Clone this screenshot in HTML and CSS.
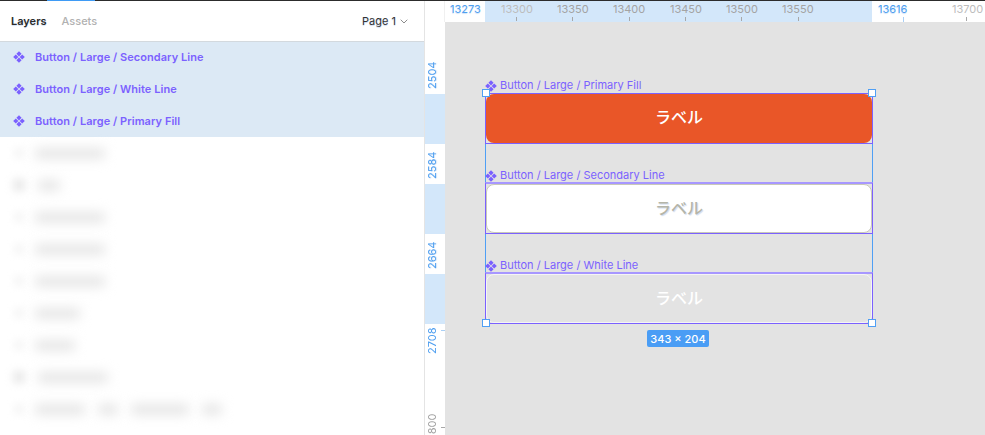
FILE: index.html
```html
<!DOCTYPE html>
<html lang="ja">
<head>
<meta charset="utf-8">
<title>Layers</title>
<link rel="stylesheet" href="styles.css">
</head>
<body>
<svg class="defs" width="0" height="0" aria-hidden="true">
  <symbol id="comp" viewBox="0 0 12 12">
    <path d="M6 .2 8.6 2.8 6 5.4 3.4 2.8ZM6 6.6 8.6 9.2 6 11.8 3.4 9.2ZM2.8 3.4 5.4 6 2.8 8.6 .2 6ZM9.2 3.4 11.8 6 9.2 8.6 6.6 6Z"/>
  </symbol>
</svg>
<div class="topline"><span class="topline-active"></span></div>
<div class="app">
  <aside class="sidebar">
    <header class="tabs">
      <span class="tab tab-on">Layers</span>
      <span class="tab">Assets</span>
      <span class="page">Page 1
        <svg class="chev" viewBox="0 0 8 5" width="8" height="5"><path d="M.7.7 4 4 7.3.7" fill="none" stroke="#8c8c8c"/></svg>
      </span>
    </header>
    <ul class="rows">
      <li class="row row-sel row-first"><svg class="ico"><use href="#comp"/></svg>Button / Large / Secondary Line</li>
      <li class="row row-sel"><svg class="ico"><use href="#comp"/></svg>Button / Large / White Line</li>
      <li class="row row-sel"><svg class="ico"><use href="#comp"/></svg>Button / Large / Primary Fill</li>
      <li class="row"><i class="dot"></i><i class="blob w70"></i></li>
      <li class="row"><i class="dot dark"></i><i class="blob w22 near"></i></li>
      <li class="row"><i class="dot"></i><i class="blob w70"></i></li>
      <li class="row"><i class="dot"></i><i class="blob w70"></i></li>
      <li class="row"><i class="dot"></i><i class="blob w70"></i></li>
      <li class="row"><i class="dot"></i><i class="blob w45"></i></li>
      <li class="row"><i class="dot"></i><i class="blob w40"></i></li>
      <li class="row"><i class="dot dark"></i><i class="blob w70 near"></i></li>
      <li class="row"><i class="dot"></i><i class="blob w50"></i><i class="blob w20 gap"></i><i class="blob w58 gap"></i><i class="blob w20 gap"></i></li>
    </ul>
  </aside>
  <main class="stage">
    <div class="ruler-top">
      <span class="corner"></span>
      <div class="track-top">
        <span class="band-h"></span>
        <span class="hl hot" style="left:5px">13273</span>
        <span class="hl faint" style="left:56px">13300</span>
        <span class="hl" style="left:112px">13350</span>
        <span class="hl" style="left:168px">13400</span>
        <span class="hl" style="left:225px">13450</span>
        <span class="hl" style="left:281px">13500</span>
        <span class="hl" style="left:337px">13550</span>
        <span class="hl hot" style="left:433px">13616</span>
        <span class="hl faint" style="left:507px">13700</span>
        <i class="tick" style="left:71px"></i><i class="tick" style="left:127px"></i>
        <i class="tick" style="left:184px"></i><i class="tick" style="left:240px"></i>
        <i class="tick" style="left:296px"></i><i class="tick" style="left:353px"></i>
        <i class="tick tick-hot" style="left:458px"></i><i class="tick" style="left:521px"></i>
      </div>
    </div>
    <div class="below">
      <div class="ruler-left">
        <span class="band-v" style="top:72px"></span>
        <span class="band-v" style="top:162px"></span>
        <span class="band-v" style="top:252px"></span>
        <span class="vl hot" style="top:38px">2504</span>
        <span class="vl hot" style="top:128px">2584</span>
        <span class="vl hot" style="top:218px">2664</span>
        <span class="vl hot plain" style="top:304px">2708</span>
        <span class="vl plain grey" style="top:390px">2800</span>
        <i class="tick-h tick-h-hot" style="top:308px"></i>
        <i class="tick-h" style="top:405px"></i>
      </div>
      <div class="canvas">
        <div class="stack">
          <span class="sel-line sel-l"></span>
          <span class="sel-line sel-r"></span>
          <section class="frame">
            <div class="frame-label"><svg class="ico ico-s"><use href="#comp"/></svg>Button / Large / Primary Fill</div>
            <div class="frame-box box-first"><div class="btn btn-fill">ラベル</div></div>
          </section>
          <section class="frame">
            <div class="frame-label"><svg class="ico ico-s"><use href="#comp"/></svg>Button / Large / Secondary Line</div>
            <div class="frame-box"><div class="btn btn-line">ラベル</div></div>
          </section>
          <section class="frame">
            <div class="frame-label"><svg class="ico ico-s"><use href="#comp"/></svg>Button / Large / White Line</div>
            <div class="frame-box"><div class="btn btn-white">ラベル</div></div>
          </section>
          <i class="handle h-tl"></i><i class="handle h-tr"></i><i class="handle h-bl"></i><i class="handle h-br"></i>
          <span class="badge">343 × 204</span>
        </div>
      </div>
    </div>
  </main>
</div>
</body>
</html>
```
FILE: styles.css
```css
* { box-sizing: border-box; }
html, body { margin: 0; height: 100%; }
body {
  width: 985px;
  height: 435px;
  overflow: hidden;
  background: #fff;
  font-family: Inter, "Noto Sans CJK JP", sans-serif;
  display: flex;
  flex-direction: column;
}
.defs { position: absolute; }

.topline { height: 1px; background: #2c2c2c; flex: none; }
.topline-active { display: block; margin-left: 47px; width: 48px; height: 1px; background: #3f9bf5; }

.app { flex: 1; display: flex; min-height: 0; }

/* Sidebar */
.sidebar { width: 425px; flex: none; border-right: 1px solid #e4e4e4; overflow: hidden; }
.tabs {
  height: 41px;
  display: flex;
  align-items: center;
  gap: 15px;
  padding: 0 16px 0 11px;
  border-bottom: 1px solid #d3d9de;
  font-size: 11px;
  font-weight: 500;
}
.tab { color: #b1b1b1; }
.tab-on { color: #2a2a2a; font-weight: 600; text-shadow: 0 1px 1px #d3e2f5; }
.page {
  margin-left: auto;
  display: flex;
  align-items: center;
  gap: 4px;
  color: #333;
  font-weight: 400;
  text-shadow: 0 1px 1px #c9d8f0;
}
.chev { display: block; margin-top: 1px; }

.rows { list-style: none; margin: 0; padding: 0; }
.row {
  height: 32px;
  display: flex;
  align-items: center;
  padding-left: 35px;
  position: relative;
  font-size: 11px;
  font-weight: 600;
  letter-spacing: .05px;
  color: #7b61ff;
}
.row-first { height: 31px; padding-bottom: 1px; }
.row-sel { background: #dce9f5; }
.ico { position: absolute; left: 13px; width: 12px; height: 12px; fill: #7b61ff; }
.blob { display: block; height: 11px; background: #e6e6e6; filter: blur(6px); border-radius: 3px; }
.dot { position: absolute; left: 13px; width: 12px; height: 12px; background: #f8f8f8; filter: blur(3px); border-radius: 3px; }
.dot.dark { background: #e8e8e8; filter: blur(4px); }
.near { margin-left: 3px; }
.gap { margin-left: 13px; }
.w70 { width: 70px; }
.w22 { width: 22px; }
.w45 { width: 45px; }
.w40 { width: 40px; }
.w50 { width: 50px; }
.w20 { width: 20px; }
.w58 { width: 58px; }

/* Stage */
.stage { flex: 1; min-width: 0; display: flex; flex-direction: column; }
.ruler-top { height: 21px; display: flex; flex: none; }
.corner { width: 20px; flex: none; border-right: 1px solid #f0f0f0; }
.track-top { flex: 1; position: relative; overflow: hidden; }
.band-h { position: absolute; left: 40px; width: 387px; top: 0; bottom: 0; background: #d3e7fa; }
.hl { position: absolute; top: 1px; font-size: 11px; line-height: 14px; color: #a3a3a3; }
.hl.faint { color: #bdbdbd; }
.hl.hot, .vl.hot { color: #4f9ff0; }
.hl.hot { text-shadow: 0 1px 1px #cfe2f7; }
.tick { position: absolute; top: 16px; width: 1px; height: 4px; background: #a8a8a8; }
.tick-hot { background: #a9cff5; height: 5px; }

.below { flex: 1; display: flex; min-height: 0; }
.ruler-left { width: 20px; flex: none; position: relative; overflow: hidden; }
.band-v { position: absolute; left: 0; right: 0; height: 50px; background: #d3e7fa; }
.vl {
  position: absolute;
  left: 1px;
  width: 13px;
  height: 30px;
  background: #fff;
  writing-mode: vertical-rl;
  transform: rotate(180deg);
  font-size: 11px;
  line-height: 13px;
  text-align: center;
  text-shadow: 0 1px 1px #cfe2f7;
}
.vl.plain { background: none; text-shadow: none; }
.vl.grey { color: #a3a3a3; }
.tick-h { position: absolute; right: 0; width: 4px; height: 1px; background: #a8a8a8; }
.tick-h-hot { background: #a9cff5; }

.canvas { flex: 1; background: #e3e3e3; position: relative; overflow: hidden; }
.stack { position: absolute; left: 40px; top: 56px; width: 388px; }
.frame { margin-bottom: 23px; position: relative; }
.frame:last-of-type { margin-bottom: 0; }
.frame-label {
  height: 15px;
  display: flex;
  align-items: center;
  padding-left: 15px;
  position: relative;
  font-size: 11px;
  line-height: 15px;
  color: #7b61ff;
}
.frame + .frame .frame-label { padding-top: 2px; }
.ico-s { left: 0; width: 12px; height: 12px; }
.frame-box {
  height: 52px;
  border: 1px solid #7b61ff;
  border-top: 2px solid #a797ff;
}
.box-first { border-top: 1px solid #7b61ff; height: 51px; }
.btn {
  height: 100%;
  padding-bottom: 4px;
  border-radius: 8px;
  display: flex;
  align-items: center;
  justify-content: center;
  font-family: "Noto Sans CJK JP", sans-serif;
  font-size: 16px;
  font-weight: 500;
}
.btn-fill { background: #e95628; color: #fff; padding-bottom: 6px; }
.btn-line { background: #fff; border: 1px solid #c9c9b8; color: #b5b5a8; text-shadow: 1px 1px 1px #cfdcf0; }
.btn-white { border: 1px solid #f5f5f5; color: #fff; }

.sel-line { position: absolute; top: 15px; bottom: 0; width: 1px; background: #4f9ff5; }
.sel-l { left: 0; }
.sel-r { right: 0; }
.handle { position: absolute; width: 8px; height: 8px; background: #fff; border: 1px solid #4f9ff5; }
.h-tl { left: -3px; top: 11px; }
.h-tr { right: -3px; top: 11px; }
.h-bl { left: -3px; bottom: -3px; }
.h-br { right: -3px; bottom: -3px; }
.badge {
  position: absolute;
  left: 162px;
  bottom: -23px;
  height: 17px;
  width: 62px;
  display: flex;
  align-items: center;
  justify-content: center;
  border-radius: 2px;
  background: #4a9df5;
  color: #fff;
  font-size: 11px;
  font-weight: 500;
  white-space: nowrap;
}
```
